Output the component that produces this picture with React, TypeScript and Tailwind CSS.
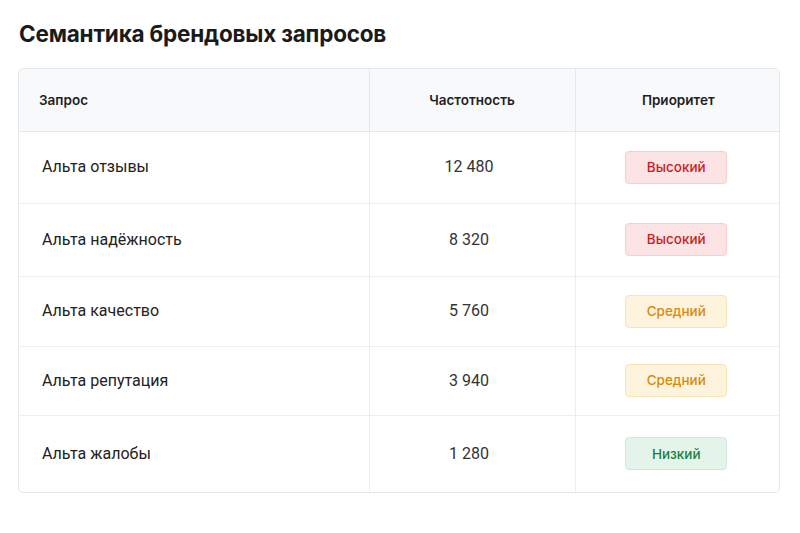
import React from "react";

type Priority = "high" | "mid" | "low";

const rows: { query: string; freq: string; priority: Priority; h: string }[] = [
    { query: "Альта отзывы", freq: "12 480", priority: "high", h: "h-[72px]" },
    { query: "Альта надёжность", freq: "8 320", priority: "high", h: "h-[73px]" },
    { query: "Альта качество", freq: "5 760", priority: "mid", h: "h-[70px]" },
    { query: "Альта репутация", freq: "3 940", priority: "mid", h: "h-[69px]" },
    { query: "Альта жалобы", freq: "1 280", priority: "low", h: "h-[77px]" },
];

const badgeStyles: Record<Priority, { label: string; cls: string }> = {
    high: { label: "Высокий", cls: "bg-[#fde4e4] border-[#f8cdcd] text-[#c81e1e]" },
    mid: { label: "Средний", cls: "bg-[#fef3dc] border-[#fbe3b4] text-[#d98a0b]" },
    low: { label: "Низкий", cls: "bg-[#e4f4ea] border-[#cde9d7] text-[#17803d]" },
};

const Badge: React.FC<{ priority: Priority }> = ({ priority }) => {
    const b = badgeStyles[priority];
    return (
        <span
            className={`inline-flex items-center justify-center w-[102px] h-[33px] rounded-[4px] border text-[13.5px] font-medium ${b.cls}`}
            style={{ fontFamily: "Inter, sans-serif" }}
        >
            {b.label}
        </span>
    );
};

const headCls = "text-[13.5px] font-semibold text-[#1f1f1f]";

const App: React.FC = () => {
    return (
        <div
            className="w-[800px] h-[533px] bg-white px-[18px] pt-[20px]"
            style={{ fontFamily: "Roboto, 'Noto Sans', sans-serif" }}
        >
            {/* Title */}
            <h1
                className="text-[22.5px] leading-[28px] font-bold text-[#1a1a1a] pl-[1px] mb-[20px] tracking-[-0.2px]"
                style={{ fontFamily: "Inter, sans-serif" }}
            >
                Семантика брендовых запросов
            </h1>

            {/* Table */}
            <div className="w-[762px] border border-[#e6e7ea] rounded-[5px] overflow-hidden">
                <table className="w-full border-collapse table-fixed">
                    <colgroup>
                        <col className="w-[350px]" />
                        <col className="w-[206px]" />
                        <col className="w-[206px]" />
                    </colgroup>
                    <thead style={{ fontFamily: "Inter, sans-serif" }}>
                        <tr className="h-[62px] bg-[#f8f9fb] border-b border-[#e6e7ea]">
                            <th className={`text-left pl-[20px] ${headCls}`}>Запрос</th>
                            <th className={`text-center border-l border-[#e6e7ea] ${headCls}`}>Частотность</th>
                            <th className={`text-center border-l border-[#e6e7ea] ${headCls}`}>Приоритет</th>
                        </tr>
                    </thead>
                    <tbody>
                        {rows.map((r, i) => (
                            <tr
                                key={i}
                                className={`${r.h} ${i < rows.length - 1 ? "border-b border-[#eceef0]" : ""}`}
                            >
                                <td className="pl-[23px] text-[16px] text-[#222]">{r.query}</td>
                                <td className="text-center text-[16px] text-[#333] border-l border-[#eceef0] pr-[6px]">
                                    {r.freq}
                                </td>
                                <td className="text-center border-l border-[#eceef0] pr-[4px]">
                                    <Badge priority={r.priority} />
                                </td>
                            </tr>
                        ))}
                    </tbody>
                </table>
            </div>
        </div>
    );
};

export default App;
